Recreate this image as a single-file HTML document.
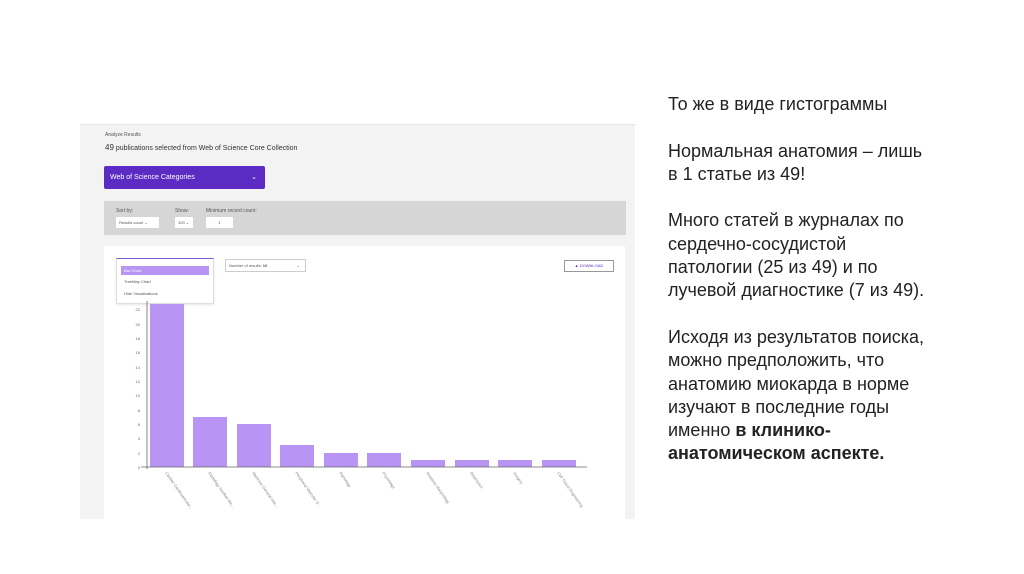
<!DOCTYPE html>
<html><head><meta charset="utf-8"><style>
body{margin:0;width:1024px;height:574px;background:#fff;position:relative;overflow:hidden;font-family:"Liberation Sans",sans-serif}
.shot{position:absolute;left:80px;top:124px;width:555px;height:394px;background:#f3f3f3;border-top:1px solid #e6e6e6}
.a{position:absolute}
.txt{position:absolute;left:668px;top:93px;font-size:18px;line-height:23.3px;color:#222;white-space:nowrap}
.t{font-size:5px;color:#555}
</style></head><body>
<div class="shot">
 <div class="a t" style="left:25px;top:7px">Analyze Results</div>
 <div class="a" style="left:25px;top:18px;font-size:7px;color:#333"><b style="font-size:8px;font-weight:normal">49</b> publications selected from Web of Science Core Collection</div>
 <div class="a" style="left:24px;top:41px;width:161px;height:23px;background:#5b2bc4;border-radius:2px;color:#fff;font-size:7px;line-height:23px;text-indent:6px">Web of Science Categories<span style="position:absolute;right:8px">⌄</span></div>
 <div class="a" style="left:24px;top:76px;width:522px;height:34px;background:#d6d6d6">
  <div class="a t" style="left:12px;top:7px">Sort by:</div>
  <div class="a t" style="left:71px;top:7px">Show:</div>
  <div class="a t" style="left:102px;top:7px">Minimum record count:</div>
  <div class="a t" style="left:12px;top:16px;width:43px;height:11px;background:#fff;line-height:11px;text-indent:3px;font-size:4px">Results count ⌄</div>
  <div class="a t" style="left:71px;top:16px;width:18px;height:11px;background:#fff;line-height:11px;text-indent:3px;font-size:4px">100 ⌄</div>
  <div class="a t" style="left:102px;top:16px;width:27px;height:11px;background:#fff;line-height:11px;text-align:center;font-size:4px">1</div>
 </div>
 <div class="a" style="left:24px;top:121px;width:521px;height:273px;background:#fff">
  <div class="a" style="left:12px;top:12px;width:96px;height:44px;border:1px solid #ddd;border-top:1px solid #7a5bd0;background:#fff;box-shadow:0 1px 2px rgba(0,0,0,.1)">
   <div class="a t" style="left:4px;top:7px;width:88px;height:9px;background:#b894f5;line-height:9px;text-indent:3px;font-size:4px;color:#fff">Bar Chart</div>
   <div class="a t" style="left:7px;top:20px;font-size:4px">TreeMap Chart</div>
   <div class="a t" style="left:7px;top:32px;font-size:4px">Hide Visualizations</div>
  </div>
  <div class="a t" style="left:121px;top:13px;width:79px;height:11px;border:1px solid #ccc;line-height:11px;text-indent:3px;font-size:4px">Number of results: <b>10</b> <span style="position:absolute;right:5px">⌄</span></div>
  <div class="a t" style="left:460px;top:14px;width:48px;height:10px;border:1px solid #999;line-height:10px;text-align:center;font-size:4px;color:#5b2bc4">▲ DOWNLOAD</div>
 </div>
 <svg class="a" style="left:0;top:0" width="555" height="394" viewBox="80 124 555 394">
  <g fill="#b894f5">
   <rect x="150" y="303" width="34" height="163"/>
   <rect x="193" y="416" width="34" height="50"/>
   <rect x="237" y="423" width="34" height="43"/>
   <rect x="280" y="444" width="34" height="22"/>
   <rect x="324" y="452" width="34" height="14"/>
   <rect x="367" y="452" width="34" height="14"/>
   <rect x="411" y="459" width="34" height="7"/>
   <rect x="455" y="459" width="34" height="7"/>
   <rect x="498" y="459" width="34" height="7"/>
   <rect x="542" y="459" width="34" height="7"/>
  </g>
  <path d="M141 466H587M147 300V468" stroke="#666" stroke-width="0.8" fill="none"/>
  <g font-size="4" fill="#666" text-anchor="end">
   <text x="140" y="468">0</text><text x="140" y="454">2</text><text x="140" y="439">4</text><text x="140" y="425">6</text><text x="140" y="411">8</text><text x="140" y="396">10</text><text x="140" y="382">12</text><text x="140" y="368">14</text><text x="140" y="353">16</text><text x="140" y="339">18</text><text x="140" y="325">20</text><text x="140" y="310">22</text>
  </g>
  <g font-size="4" fill="#888">
   <text transform="translate(165,472) rotate(55)">Cardiac Cardiovascular...</text>
   <text transform="translate(208,472) rotate(55)">Radiology Nuclear Me...</text>
   <text transform="translate(252,472) rotate(55)">Medicine General Inte...</text>
   <text transform="translate(295,472) rotate(55)">Peripheral Vascular D...</text>
   <text transform="translate(339,472) rotate(55)">Pathology</text>
   <text transform="translate(382,472) rotate(55)">Physiology</text>
   <text transform="translate(426,472) rotate(55)">Anatomy Morphology</text>
   <text transform="translate(470,472) rotate(55)">Biophysics</text>
   <text transform="translate(513,472) rotate(55)">Surgery</text>
   <text transform="translate(557,472) rotate(55)">Cell Tissue Engineering</text>
  </g>
 </svg>
</div>
<div class="txt">То же в виде гистограммы<br><br>Нормальная анатомия – лишь<br>в 1 статье из 49!<br><br>Много статей в журналах по<br>сердечно-сосудистой<br>патологии (25 из 49) и по<br>лучевой диагностике (7 из 49).<br><br>Исходя из результатов поиска,<br>можно предположить, что<br>анатомию миокарда в норме<br>изучают в последние годы<br>именно <b>в клинико-<br>анатомическом аспекте.</b></div>
</body></html>
